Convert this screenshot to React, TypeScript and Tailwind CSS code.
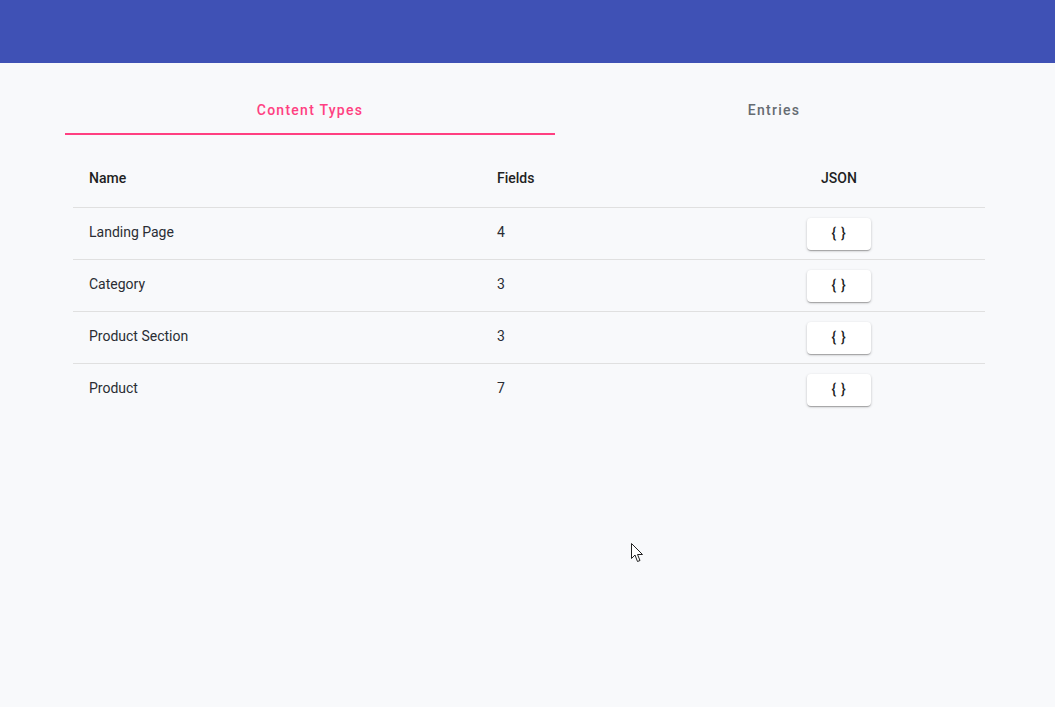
import React from "react";

const rows = [
  { name: "Landing Page", fields: 4 },
  { name: "Category", fields: 3 },
  { name: "Product Section", fields: 3 },
  { name: "Product", fields: 7 },
];

export default function App() {
  return (
    <div
      className="relative min-h-[707px] bg-[#f8f9fb] text-[rgba(0,0,0,0.87)]"
      style={{ fontFamily: "Roboto, 'Liberation Sans', sans-serif" }}
    >
      {/* App bar */}
      <div className="h-[63px] bg-[#3f51b5]" />

      {/* Tabs */}
      <div className="mt-[22px] flex pl-[65px]">
        <div className="flex h-[50px] w-[490px] shrink-0 items-center justify-center border-b-2 border-[#ff4081] pt-[3px] text-[14px] font-medium tracking-[0.09em] text-[#ff4081]">
          Content Types
        </div>
        <div className="flex h-[48px] w-[438px] shrink-0 items-center justify-center pt-[3px] text-[14px] font-medium tracking-[0.09em] text-[#666c72]">
          Entries
        </div>
      </div>

      {/* Table */}
      <div className="mx-[73px] mt-[15px] w-[912px] text-[14px]">
        <div className="grid h-[58px] grid-cols-[408px_210px_296px] items-center border-b border-[#e0e0e0] font-medium text-[#1f1f23]">
          <div className="pl-4">Name</div>
          <div className="pl-4">Fields</div>
          <div className="text-center">JSON</div>
        </div>
        {rows.map((r, i) => (
          <div
            key={r.name}
            className={`grid h-[52px] grid-cols-[408px_210px_296px] items-center border-b text-[#2a2d34] ${
              i < rows.length - 1 ? "border-[#e0e0e0]" : "border-transparent"
            }`}
          >
            <div className="pb-[2px] pl-4">{r.name}</div>
            <div className="pb-[2px] pl-4">{r.fields}</div>
            <div className="flex justify-center">
              <button className="h-[32px] w-[64px] rounded-[4px] bg-white text-[14px] font-medium tracking-[0.05em] text-[#1c1c1c] shadow-[0_1px_3px_rgba(0,0,0,0.2),0_2px_1px_-1px_rgba(0,0,0,0.12),0_1px_1px_rgba(0,0,0,0.14)]">
                {"{ }"}
              </button>
            </div>
          </div>
        ))}
      </div>

      {/* Mouse pointer */}
      <svg
        className="absolute left-[631px] top-[543px]"
        width="13"
        height="20"
        viewBox="0 0 13 20"
      >
        <path
          d="M0.5 0.5 L0.5 15.5 L4 12 L6.5 18.5 L9 17.5 L6.5 11.5 L11.5 11.5 Z"
          fill="#fff"
          stroke="#222"
          strokeWidth="1"
          strokeLinejoin="round"
        />
      </svg>
    </div>
  );
}
